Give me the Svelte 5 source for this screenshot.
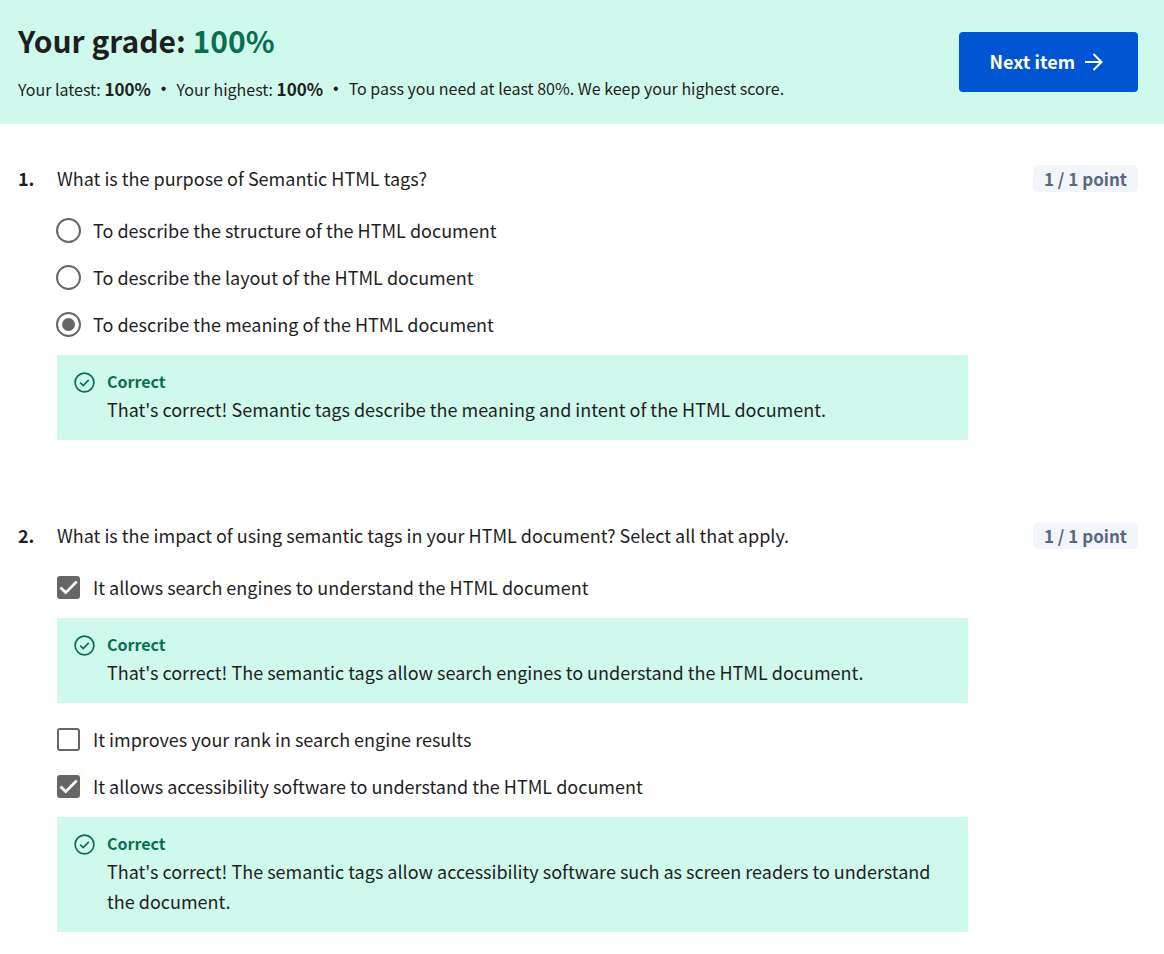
<script>
  const questions = [
    {
      number: 1,
      type: 'radio',
      prompt: 'What is the purpose of Semantic HTML tags?',
      options: [
        { text: 'To describe the structure of the HTML document', checked: false },
        { text: 'To describe the layout of the HTML document', checked: false },
        {
          text: 'To describe the meaning of the HTML document',
          checked: true,
          feedback: "That's correct! Semantic tags describe the meaning and intent of the HTML document."
        }
      ]
    },
    {
      number: 2,
      type: 'checkbox',
      prompt: 'What is the impact of using semantic tags in your HTML document? Select all that apply.',
      options: [
        {
          text: 'It allows search engines to understand the HTML document',
          checked: true,
          feedback: "That's correct! The semantic tags allow search engines to understand the HTML document."
        },
        { text: 'It improves your rank in search engine results', checked: false },
        {
          text: 'It allows accessibility software to understand the HTML document',
          checked: true,
          feedback:
            "That's correct! The semantic tags allow accessibility software such as screen readers to understand the document."
        }
      ]
    }
  ];
</script>

<header class="banner">
  <div class="summary">
    <h1>Your grade: <span class="grade">100%</span></h1>
    <p class="scores">
      <span>Your latest: <strong>100%</strong></span>
      <span class="dot">•</span>
      <span>Your highest: <strong>100%</strong></span>
      <span class="dot">•</span>
      <span>To pass you need at least 80%. We keep your highest score.</span>
    </p>
  </div>
  <button class="next" type="button">
    <span class="caption">Next item</span>
    <svg width="18" height="18" viewBox="0 0 18 18" fill="none" stroke="currentColor" stroke-width="2" aria-hidden="true">
      <path d="M0 9h16.500M8.500 1 16.500 9l-8 8" />
    </svg>
  </button>
</header>

<main>
  {#each questions as question}
    <section class="question">
      <strong class="number">{question.number}.</strong>
      <fieldset>
        <legend>{question.prompt}</legend>
        {#each question.options as option, i}
          <label class="option" for="q{question.number}-{i}">
            {#if question.type === 'radio'}
              <input type="radio" id="q{question.number}-{i}" name="q{question.number}" checked={option.checked} />
            {:else}
              <span class="box">
                <input type="checkbox" id="q{question.number}-{i}" checked={option.checked} />
                <svg class="tick" width="23" height="23" viewBox="0 0 24 24" fill="none" stroke="#fff" stroke-width="2.800" aria-hidden="true">
                  <path d="M3.600 12 9.100 17.300 20.600 5.800" />
                </svg>
              </span>
            {/if}
            <span class="caption">{option.text}</span>
          </label>
          {#if option.feedback}
            <div class="feedback">
              <svg width="23" height="23" viewBox="0 0 23 23" fill="none" stroke="currentColor" stroke-width="1.700" aria-hidden="true">
                <circle cx="11.500" cy="11.500" r="9.400" />
                <path d="M7.200 11.600 10.200 14.500 15.800 8.800" />
              </svg>
              <div>
                <h2>Correct</h2>
                <p>{option.feedback}</p>
              </div>
            </div>
          {/if}
        {/each}
      </fieldset>
      <span class="points">1 / 1 point</span>
    </section>
  {/each}
</main>

<style>
  :global(body) {
    margin: 0;
    background: #fff;
    color: #1f1f1f;
    font-family: 'Noto Sans CJK SC', 'Noto Sans', sans-serif;
    font-size: 18px;
    line-height: 30px;
  }
  h1, h2, p, fieldset, legend {
    margin: 0;
    padding: 0;
    border: 0;
  }
  .banner {
    display: flex;
    align-items: center;
    justify-content: space-between;
    gap: 24px;
    padding: 14px 26px 18px 18px;
    background: #d0f9ed;
  }
  .summary {
    display: flex;
    flex-direction: column;
    gap: 6px;
  }
  h1 {
    font-size: 30px;
    font-weight: 700;
    line-height: 52px;
  }
  .grade {
    color: #087051;
  }
  .scores {
    display: flex;
    flex-wrap: wrap;
    font-size: 16px;
    line-height: 33px;
  }
  .scores strong {
    font-size: 17px;
    font-weight: 700;
  }
  .dot {
    padding: 0 10px;
    font-family: 'Liberation Sans', sans-serif;
  }
  .next {
    display: flex;
    flex: none;
    align-items: center;
    gap: 10px;
    height: 60px;
    margin: 2px 0 -2px;
    padding: 0 35px 0 31px;
    border: 0;
    border-radius: 4px;
    background: #0056d2;
    color: #fff;
    font: inherit;
    font-weight: 700;
  }
  .caption {
    padding-bottom: 2px;
  }
  main {
    display: flex;
    flex-direction: column;
    gap: 67px;
    padding: 39px 26px 8px 18px;
  }
  .question {
    display: grid;
    grid-template-columns: 39px minmax(0, 1fr) 170px;
    align-items: start;
  }
  fieldset {
    min-width: 0;
  }
  legend {
    margin-bottom: 14px;
  }
  .option {
    display: flex;
    align-items: center;
    gap: 13px;
    min-height: 47px;
  }
  input {
    display: grid;
    flex: none;
    place-items: center;
    box-sizing: border-box;
    width: 23px;
    height: 23px;
    margin: 0;
    border: 2px solid #666;
    background: #fff;
    appearance: none;
  }
  input[type='radio'] {
    width: 25px;
    height: 25px;
    margin: 0 -1px;
    border-radius: 50%;
  }
  input[type='radio']:checked::before {
    width: 13px;
    height: 13px;
    border-radius: 50%;
    background: #666;
    content: '';
  }
  .box {
    display: grid;
    flex: none;
    place-items: center;
  }
  .box > * {
    grid-area: 1 / 1;
  }
  input[type='checkbox'] {
    border-radius: 3px;
  }
  input[type='checkbox']:checked {
    background: #666;
  }
  .tick {
    visibility: hidden;
    z-index: 1;
    pointer-events: none;
  }
  input:checked + .tick {
    visibility: visible;
  }
  .feedback {
    display: flex;
    gap: 11px;
    margin: 7px 0 13px;
    padding: 13px 16px 16px;
    background: #d0f9ed;
  }
  .feedback svg {
    flex: none;
    margin-top: 3px;
    color: #087051;
  }
  h2 {
    color: #087051;
    font-size: 16px;
    font-weight: 700;
    line-height: 26px;
  }
  .points {
    justify-self: end;
    margin-top: 2px;
    padding: 0 11px;
    border-radius: 5px;
    background: #f2f5fa;
    color: #5b6780;
    font-size: 17px;
    font-weight: 700;
    line-height: 27px;
  }
</style>
